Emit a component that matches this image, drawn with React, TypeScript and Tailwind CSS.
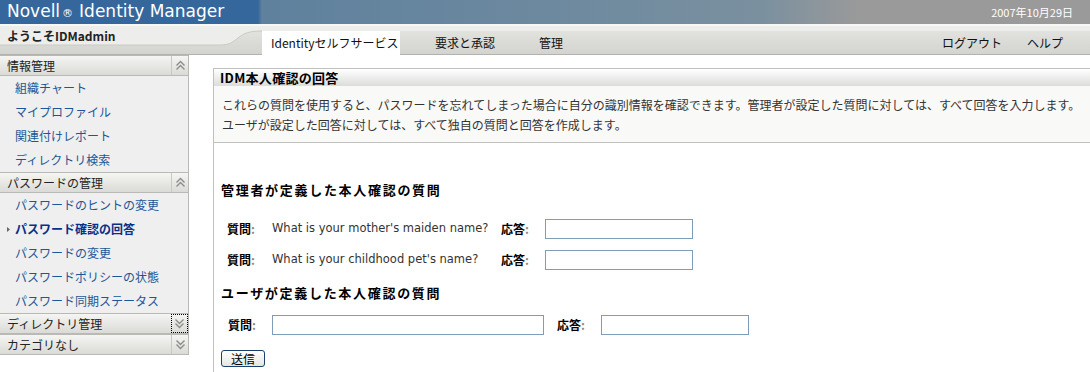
import React from "react";

function Chevrons({ up }: { up: boolean }) {
  return (
    <svg width="11" height="11" viewBox="0 0 11 11" fill="none" stroke="#8c8c8c" strokeWidth="1.4">
      {up ? (
        <>
          <path d="M1.5 5.5 L5.5 1.5 L9.5 5.5" />
          <path d="M1.5 9.5 L5.5 5.5 L9.5 9.5" />
        </>
      ) : (
        <>
          <path d="M1.5 1.5 L5.5 5.5 L9.5 1.5" />
          <path d="M1.5 5.5 L5.5 9.5 L9.5 5.5" />
        </>
      )}
    </svg>
  );
}

function SectionHeader({ label, up, focused }: { label: string; up: boolean; focused?: boolean }) {
  return (
    <div className="flex h-[21px] border-y border-[#b9b9b5] bg-[linear-gradient(#f5f5f3,#dadad6)]">
      <div className="flex-1 pl-[7px] leading-[19px] text-[#222]">{label}</div>
      <div
        className={
          focused
            ? "flex w-[17px] items-center justify-center border border-dotted border-black"
            : "flex w-[17px] items-center justify-center border-l border-[#c8c8c4]"
        }
      >
        <Chevrons up={up} />
      </div>
    </div>
  );
}

function Item({ label, active }: { label: string; active?: boolean }) {
  if (active) {
    return (
      <div className="flex h-[24px] items-center">
        <div className="flex w-[15px] justify-center pl-[2px]">
          <svg width="4" height="5" viewBox="0 0 4 5">
            <path d="M0 0 L3 2.5 L0 5 Z" fill="#666" />
          </svg>
        </div>
        <span className="font-bold text-[#0a2f86]">{label}</span>
      </div>
    );
  }
  return <div className="h-[24px] pl-[15px] leading-[24px] text-[#1d5696]">{label}</div>;
}

const inputCls = "h-[20px] border border-[#7f9db9] bg-white";

export default function App() {
  return (
    <div className="h-[372px] w-[1090px] overflow-hidden bg-white font-['Noto_Sans_CJK_JP',sans-serif] text-[12px] text-[#222]">
      {/* Top banner */}
      <div className="flex h-[24px] items-center justify-between bg-[linear-gradient(90deg,#36679c_0,#36679c_258px,#5f819d_262px,#6b889f_520px,#7a909f_760px,#9a9a9a_860px,#9a9a9a_100%)]">
        <div className="flex items-baseline pl-[7px] font-['DejaVu_Sans',sans-serif] text-[17px] leading-[24px] text-white">
          <span>Novell</span>
          <span className="mx-[2px] text-[11px]">®</span>
          <span className="ml-[4px]">Identity Manager</span>
        </div>
        <div className="pr-[17px] text-[11px] text-white">2007年10月29日</div>
      </div>

      {/* Nav bar */}
      <div className="relative h-[31px] border-b border-[#b2b2ae] bg-[linear-gradient(#e6e6e2,#d3d3cf)]">
        <svg className="absolute left-0 top-0" width="1090" height="31" viewBox="0 0 1090 31">
          <rect x="0" y="0" width="1090" height="2" fill="#f7f7f5" />
          <path d="M0 2 H1090 V7 H262 C250 7 244 9 238 14 C232 19 228 21 220 21 H0 Z" fill="#ededeb" />
          <path d="M0 21 H220 C228 21 232 19 238 14 C244 9 250 7 262 7" fill="none" stroke="#c9c9c5" strokeWidth="1" />
        </svg>
        <div className="relative flex h-full">
          <div className="w-[262px] pl-[7px] pt-[2px] font-bold leading-[20px] text-[#222]">ようこそIDMadmin</div>
          <div className="mt-[7px] flex h-[24px] w-[138px] items-center bg-white pl-[9px] text-[#111]">
            Identityセルフサービス
          </div>
          <div className="mt-[7px] flex h-[24px] items-center pl-[35px] text-[#111]">要求と承認</div>
          <div className="mt-[7px] flex h-[24px] items-center pl-[44px] text-[#111]">管理</div>
          <div className="flex-1" />
          <div className="mt-[7px] flex h-[24px] items-center text-[#111]">ログアウト</div>
          <div className="mt-[7px] flex h-[24px] items-center pl-[25px] pr-[27px] text-[#111]">ヘルプ</div>
        </div>
      </div>

      {/* Body */}
      <div className="flex">
        {/* Sidebar */}
        <div className="w-[189px] self-start border-r border-[#b8b8b4] bg-[#efefef]">
          <SectionHeader label="情報管理" up />
          <Item label="組織チャート" />
          <Item label="マイプロファイル" />
          <Item label="関連付けレポート" />
          <Item label="ディレクトリ検索" />
          <SectionHeader label="パスワードの管理" up />
          <Item label="パスワードのヒントの変更" />
          <Item label="パスワード確認の回答" active />
          <Item label="パスワードの変更" />
          <Item label="パスワードポリシーの状態" />
          <Item label="パスワード同期ステータス" />
          <SectionHeader label="ディレクトリ管理" up={false} focused />
          <SectionHeader label="カテゴリなし" up={false} />
        </div>

        {/* Main */}
        <div className="ml-[24px] mt-[13px] h-[320px] flex-1 border-l border-t border-[#c0c0bc]">
          <div className="h-[17px] bg-[linear-gradient(#ffffff,#dcdcda)] pl-[6px] text-[13px] font-bold leading-[17px] tracking-[0.3px] text-black">
            IDM本人確認の回答
          </div>
          <div className="h-[57px] whitespace-nowrap border-b border-[#c0c0bc] bg-[#f9f9f7] pl-[8px] pt-[9px] leading-[20px] text-[#333]">
            これらの質問を使用すると、パスワードを忘れてしまった場合に自分の識別情報を確認できます。管理者が設定した質問に対しては、すべて回答を入力します。
            <br />
            ユーザが設定した回答に対しては、すべて独自の質問と回答を作成します。
          </div>

          <div className="pl-[7px]">
            <div className="mt-[39px] h-[16px] text-[13px] font-bold leading-[16px] tracking-[1.7px] text-black">
              管理者が定義した本人確認の質問
            </div>

            <div className="mt-[21px] grid grid-cols-[45px_229px_44px_148px] items-center gap-y-[11px] pl-[6px]">
              <div className="font-bold text-black">
                質問<span className="text-[#888]">:</span>
              </div>
              <div className="font-['DejaVu_Sans',sans-serif] text-[11.5px] text-[#333]">What is your mother's maiden name?</div>
              <div className="font-bold text-black">
                応答<span className="text-[#888]">:</span>
              </div>
              <div className={inputCls} />

              <div className="font-bold text-black">
                質問<span className="text-[#888]">:</span>
              </div>
              <div className="font-['DejaVu_Sans',sans-serif] text-[11.5px] text-[#333]">What is your childhood pet's name?</div>
              <div className="font-bold text-black">
                応答<span className="text-[#888]">:</span>
              </div>
              <div className={inputCls} />
            </div>

            <div className="mt-[15px] h-[16px] text-[13px] font-bold leading-[16px] tracking-[1.7px] text-black">
              ユーザが定義した本人確認の質問
            </div>

            <div className="mt-[14px] grid grid-cols-[44px_272px_57px_148px] items-center pl-[7px]">
              <div className="font-bold text-black">
                質問<span className="text-[#888]">:</span>
              </div>
              <div className="h-[20px] w-[272px] border border-[#7f9db9] bg-white" />
              <div className="pl-[13px] font-bold text-black">
                応答<span className="text-[#888]">:</span>
              </div>
              <div className={inputCls} />
            </div>

            <button className="mt-[15px] h-[17px] w-[44px] rounded-[3px] border border-[#1c3f6e] bg-[linear-gradient(#ffffff,#e6e6e0)] text-[12px] leading-[14px] text-black">
              送信
            </button>
          </div>
        </div>
      </div>
    </div>
  );
}
